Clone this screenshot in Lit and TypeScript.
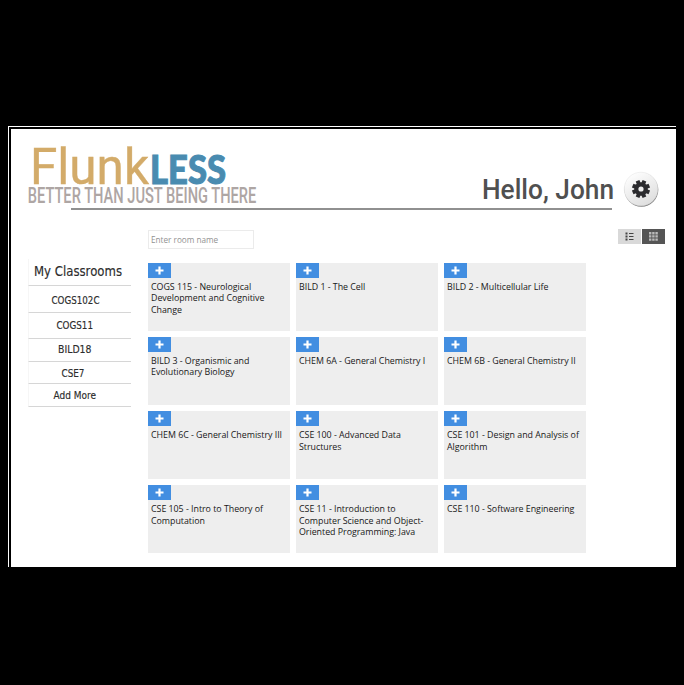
import { LitElement, html, svg, css } from "lit";
import { customElement, property } from "lit/decorators.js";

@customElement("course-card")
class CourseCard extends LitElement {
  @property() name = "";
  static styles = css`
    :host { display: block; background: #eeeeee; height: 68px; }
    .add { display: flex; align-items: center; justify-content: center; width: 23px; height: 15px; padding: 0; border: 0; background: #428ee1; }
    .add svg { display: block; }
    .name { margin: 4px 1px 0 3px; font: 8.85px/11.5px "Open Sans", "Noto Sans", sans-serif; letter-spacing: -0.02px; color: #181818; }
  `;
  render() {
    return html`
      <button class="add" aria-label="Add">
        <svg width="9" height="9" viewBox="0 0 9 9"><path d="M4.5 .5v8M.5 4.5h8" stroke="#fff" stroke-width="2.2" /></svg>
      </button>
      <div class="name">${this.name}</div>
    `;
  }
}

const COURSES = [
  "COGS 115 - Neurological Development and Cognitive Change",
  "BILD 1 - The Cell",
  "BILD 2 - Multicellular Life",
  "BILD 3 - Organismic and Evolutionary Biology",
  "CHEM 6A - General Chemistry I",
  "CHEM 6B - General Chemistry II",
  "CHEM 6C - General Chemistry III",
  "CSE 100 - Advanced Data Structures",
  "CSE 101 - Design and Analysis of Algorithm",
  "CSE 105 - Intro to Theory of Computation",
  "CSE 11 - Introduction to Computer Science and Object-Oriented Programming: Java",
  "CSE 110 - Software Engineering",
];

// label, row height, text start, text width, baseline within the row
const ROOMS: [string, number, number, number, number][] = [
  ["COGS102C", 27, 23.5, 48, 17.5],
  ["COGS11", 25.5, 28.5, 36.5, 15.5],
  ["BILD18", 23.5, 30, 33.5, 14],
  ["CSE7", 22, 33.5, 23, 14.5],
  ["Add More", 22.5, 25.5, 42.5, 14.8],
];

@customElement("app-root")
class AppRoot extends LitElement {
  static styles = css`
    :host { display: block; box-sizing: border-box; height: 685px; background: #000; padding: 126px 8px 0; overflow: hidden; }
    * { box-sizing: border-box; }
    .frame { height: 441px; border: solid #fff; border-width: 1px 0 0 1px; padding: 2px 0 0 2px; }
    .page { height: 438px; background: #fff; padding-top: 14px; }
    svg { display: block; overflow: visible; }
    header { display: flex; height: 65px; }
    .banner text { font-family: Roboto, sans-serif; }
    .banner .less { font-family: Lato, sans-serif; font-weight: 900; }
    .settings { width: 36px; height: 36px; margin: 28px 0 0 10px; padding: 0; border: 0; background: none; }
    .rule { width: 541px; height: 2px; margin-left: 60px; background: #909090; }
    .tools { display: flex; justify-content: space-between; margin: 20px 11px 0 137px; height: 19px; }
    .search { width: 106px; height: 19px; padding: 0 3px 1px 2px; border: 1px solid #ebebeb; outline: 0; background: #fff; font: 8.2px "Open Sans", sans-serif; color: #333; }
    .search::placeholder { color: #929292; opacity: 1; }
    .views { display: flex; gap: 1px; height: 15px; margin-top: -1px; }
    .view { display: flex; align-items: center; justify-content: center; width: 23px; height: 15px; padding: 0; border: 0; background: #d9d9d9; color: #444; }
    .view.on { background: #555; color: #bbb; }
    .body { display: flex; gap: 17px; margin: 14px 0 0 17px; }
    .rooms { width: 103px; margin-top: -4px; }
    .room { border-bottom: 1px solid #d6d6d6; border-left: 1px solid #f6f6f6; }
    .rooms text { font-family: "DejaVu Sans", sans-serif; fill: #2c2c2c; stroke: #2c2c2c; stroke-width: 0.15; }
    .courses { display: grid; grid-template-columns: repeat(3, 142px); gap: 6.25px 6px; align-content: start; margin-top: -0.4px; }
  `;

  row(label: string, h: number, x: number, w: number, base: number, size: number) {
    return html`<div class="room">
      <svg width="102" height=${h - 1}>
        <text x=${x - 1} y=${base} font-size=${size} textLength=${w} lengthAdjust="spacingAndGlyphs">${label}</text>
      </svg>
    </div>`;
  }

  render() {
    return html`
      <div class="frame"><div class="page">
        <header>
          <svg class="banner" width="602" height="65" viewBox="11 143 602 65">
            <text x="30" y="183.5" font-size="49.5" fill="#d3ab69" stroke="#d3ab69" stroke-width=".4" textLength="119" lengthAdjust="spacingAndGlyphs">Flunk</text>
            <text class="less" x="150" y="183.5" font-size="39.5" fill="#498bb0" stroke="#498bb0" stroke-width="1" textLength="76" lengthAdjust="spacingAndGlyphs">LESS</text>
            <text x="27.8" y="202.5" font-size="22.5" font-weight="500" fill="#aea6a4" textLength="228.5" lengthAdjust="spacingAndGlyphs">BETTER THAN JUST BEING THERE</text>
            <text x="482" y="199" font-size="27.5" font-weight="500" fill="#505050" textLength="132" lengthAdjust="spacingAndGlyphs">Hello, John</text>
          </svg>
          <button class="settings" aria-label="Settings">
            <svg width="36" height="36" viewBox="-18 -18 36 36">
              <defs>
                <linearGradient id="face" x1=".2" y1="0" x2=".8" y2="1"><stop offset="0" stop-color="#fff" /><stop offset="1" stop-color="#dcdcdc" /></linearGradient>
              </defs>
              <circle cx=".4" cy=".9" r="16.9" fill="#777" />
              <circle r="16.8" fill="url(#face)" stroke="#e2e2e2" stroke-width=".5" />
              ${[0, 45, 90, 135].map((a) => svg`<path d="M0 -9V9" stroke="#2b2b2e" stroke-width="4" transform="rotate(${a + 22.5})" />`)}
              <circle r="6.8" fill="#2b2b2e" />
              <circle r="2.6" fill="#eee" />
            </svg>
          </button>
        </header>
        <div class="rule"></div>
        <div class="tools">
          <input class="search" placeholder="Enter room name" />
          <div class="views">
            <button class="view" aria-label="List">
              <svg width="9" height="9" viewBox="0 0 9 9" fill="currentColor"><path d="M.5 .5h2v2h-2zM.5 3.5h2v2h-2zM.5 6.5h2v2h-2zM4 1h4.5v1H4zM4 4h4.5v1H4zM4 7h4.5v1H4z" /></svg>
            </button>
            <button class="view on" aria-label="Grid">
              <svg width="9" height="9" viewBox="0 0 9 9" fill="currentColor"><path d="M0 0h2.4v2.4H0zM3.2 0h2.4v2.4H3.2zM6.4 0h2.4v2.4H6.4zM0 3.2h2.4v2.4H0zM3.2 3.2h2.4v2.4H3.2zM6.4 3.2h2.4v2.4H6.4zM0 6.4h2.4v2.4H0zM3.2 6.4h2.4v2.4H3.2zM6.4 6.4h2.4v2.4H6.4z" /></svg>
            </button>
          </div>
        </div>
        <div class="body">
          <nav class="rooms">
            ${this.row("My Classrooms", 27, 6, 88, 16.8, 13.8)}
            ${ROOMS.map(([l, h, x, w, b]) => this.row(l, h, x, w, b, 10.8))}
          </nav>
          <div class="courses">${COURSES.map((c) => html`<course-card .name=${c}></course-card>`)}</div>
        </div>
      </div></div>
    `;
  }
}
